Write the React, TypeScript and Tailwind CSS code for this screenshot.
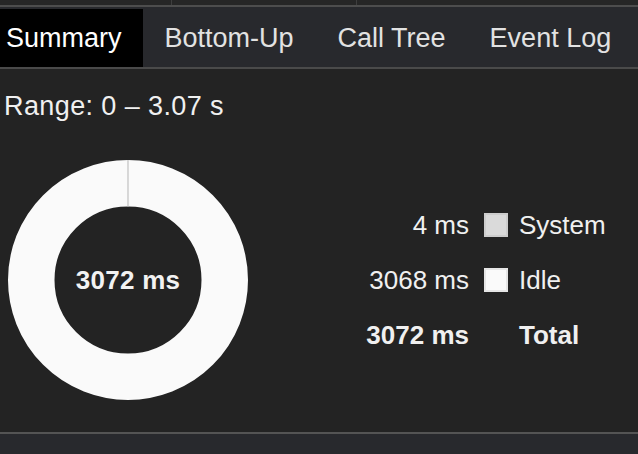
import React from 'react';

const TABS = ['Summary', 'Bottom-Up', 'Call Tree', 'Event Log'];

const ROWS = [
  { value: '4 ms', label: 'System', fill: 'bg-[#dadada]', border: 'border-[#cdcdcd]' },
  { value: '3068 ms', label: 'Idle', fill: 'bg-[#fafafa]', border: 'border-[#e6e6e6]' },
];

function Donut() {
  // idle takes almost everything; system is a hairline at the top
  return (
    <div className="relative w-[240px] h-[240px]">
      <svg width="240" height="240" viewBox="0 0 240 240">
        <circle cx="120" cy="120" r="96.75" fill="none" stroke="#fafafa" strokeWidth="46.5" />
        <line x1="120" y1="0" x2="120" y2="47" stroke="#b5b5b5" strokeWidth="1" />
      </svg>
      <div className="absolute inset-0 flex items-center justify-center text-[26px] tracking-[0.3px] font-bold text-[#f2f2f2]">
        3072 ms
      </div>
    </div>
  );
}

export default function App() {
  return (
    <div className="h-screen w-full flex flex-col bg-[#232323] font-['Liberation_Sans',Arial,sans-serif] overflow-hidden">
      {/* top strip */}
      <div className="h-[5px] bg-[#262626] flex border-b-2 border-[#4d4d4d] box-content">
        <div className="w-[172px] border-r border-[#3e3e3e]" />
        <div className="w-[185px] border-r border-[#3e3e3e]" />
      </div>

      {/* Tabs */}
      <div className="h-[58px] pt-[2px] flex bg-[#28292d] border-b-2 border-[#4a4a4a] box-content overflow-hidden">
        {TABS.map((t, i) => (
          <div
            key={t}
            className={`h-full shrink-0 whitespace-nowrap flex items-center text-[27px] ${
              i === 0 ? 'bg-black text-white pl-[6px] pr-[21px]' : 'text-[#e2e2e2] px-[22px]'
            }`}
          >
            {t}
          </div>
        ))}
      </div>

      {/* Content */}
      <div className="flex-1 flex flex-col text-[#f0f0f0]">
        <div className="mt-[22px] pl-[4px] h-[30px] leading-[30px] text-[27px] tracking-[0.4px]">Range: 0 – 3.07 s</div>

        <div className="mt-[39px] flex items-center pl-[8px]">
          <Donut />
          <div className="ml-[118px] grid grid-cols-[103px_37px_auto] auto-rows-[55px] items-center text-[26px]">
            {ROWS.map((r) => (
              <React.Fragment key={r.label}>
                <span className="text-right">{r.value}</span>
                <span className="pl-[15px]">
                  <span className={`block w-[24px] h-[24px] border-2 ${r.fill} ${r.border}`} />
                </span>
                <span className="pl-[13px]">{r.label}</span>
              </React.Fragment>
            ))}
            <span className="text-right font-bold">3072 ms</span>
            <span />
            <span className="pl-[13px] font-bold">Total</span>
          </div>
        </div>
      </div>

      {/* bottom bar */}
      <div className="h-[20px] bg-[#28292d] border-t-2 border-[#545454] box-content" />
    </div>
  );
}
